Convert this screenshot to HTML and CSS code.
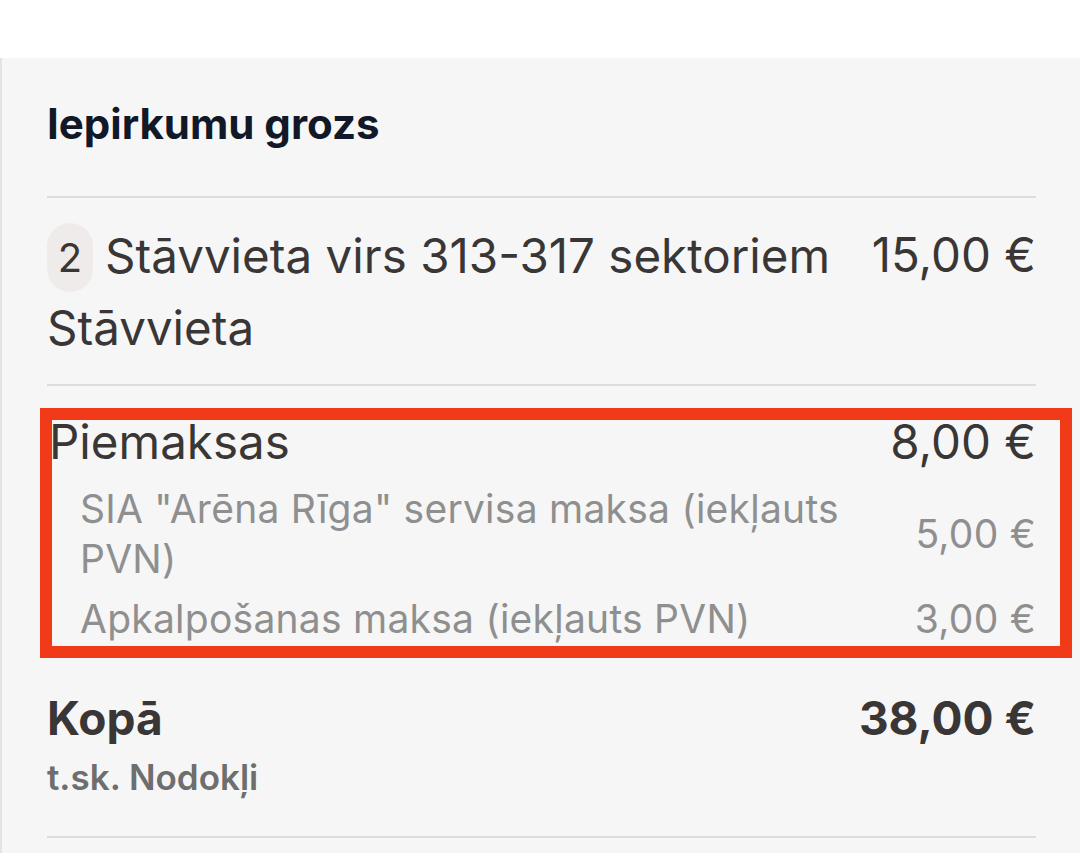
FILE: index.html
```html
<!DOCTYPE html>
<html lang="lv">
<head>
<meta charset="utf-8">
<title>Iepirkumu grozs</title>
<link rel="stylesheet" href="styles.css">
</head>
<body>
<div class="top-space"></div>
<main class="cart">
  <h2 class="cart-title">Iepirkumu grozs</h2>

  <section class="line-item">
    <div class="line-main">
      <div class="line-label">
        <span class="qty">2</span><span class="line-name">Stāvvieta virs 313-317 sektoriem</span>
      </div>
      <div class="price">15,00 €</div>
    </div>
    <div class="line-sub">Stāvvieta</div>
  </section>

  <section class="fees">
    <div class="fees-head">
      <div class="fees-name">Piemaksas</div>
      <div class="price">8,00 €</div>
    </div>
    <ul class="fee-list">
      <li class="fee">
        <span class="fee-name">SIA "Arēna Rīga" servisa maksa (iekļauts PVN)</span>
        <span class="fee-price">5,00 €</span>
      </li>
      <li class="fee">
        <span class="fee-name">Apkalpošanas maksa (iekļauts PVN)</span>
        <span class="fee-price">3,00 €</span>
      </li>
    </ul>
  </section>

  <section class="total">
    <div class="total-row">
      <div class="total-name">Kopā</div>
      <div class="total-price">38,00 €</div>
    </div>
    <div class="tax">t.sk. Nodokļi</div>
  </section>
</main>
</body>
</html>
```

FILE: styles.css
```css
html, body {
  margin: 0;
  padding: 0;
  background: #ffffff;
}

body {
  font-family: Inter, "Noto Sans", "Liberation Sans", sans-serif;
  color: #3a3636;
}

.top-space {
  height: 58px;
}

.cart {
  background: #f6f6f6;
  border-left: 2px solid #e4e4e4;
  padding: 33px 44px 0 45px;
  min-height: calc(100vh - 91px);
}

.cart-title {
  margin: 0;
  font-size: 42px;
  line-height: 66px;
  font-weight: 700;
  color: #111827;
  padding-bottom: 39px;
  border-bottom: 2px solid #dddddd;
}

.line-item {
  padding: 21px 0 20px;
  border-bottom: 2px solid #dddddd;
  font-size: 47.5px;
  line-height: 72px;
}

.line-main {
  display: flex;
  justify-content: space-between;
  align-items: flex-start;
  gap: 24px;
}

.line-label {
  display: flex;
  align-items: center;
}

.qty {
  display: inline-flex;
  align-items: center;
  justify-content: center;
  width: 46px;
  height: 69px;
  border-radius: 23px;
  background: #f0ebeb;
  font-size: 40px;
  margin-right: 12px;
  margin-top: 4px;
}

.price {
  white-space: nowrap;
}

.fees {
  position: relative;
  padding: 20px 0 20px;
  font-size: 47.5px;
  line-height: 72px;
}

.fees::before {
  content: "";
  position: absolute;
  left: -7px;
  right: -36px;
  top: 22px;
  height: 250px;
  box-sizing: border-box;
  border: 12px solid #f13a18;
  z-index: 0;
}

.fees-head,
.fee-list {
  position: relative;
  z-index: 1;
}

.fees-head {
  display: flex;
  justify-content: space-between;
}

.fees-name {
  margin-left: 2px;
}

.fee-list {
  list-style: none;
  margin: 6px 0 0;
  padding: 0 0 0 33px;
  display: flex;
  flex-direction: column;
  gap: 10px;
  font-size: 39px;
  letter-spacing: 0.25px;
  line-height: 50px;
  color: #8f8f8f;
}

.fee {
  display: flex;
  justify-content: space-between;
  align-items: center;
  gap: 24px;
}

.fee-name {
  flex: 1;
}

.fee-price {
  white-space: nowrap;
}

.total {
  padding: 21px 0 34px;
  border-bottom: 2px solid #dddddd;
}

.total-row {
  display: flex;
  justify-content: space-between;
  font-size: 46px;
  line-height: 67px;
  font-weight: 700;
}

.tax {
  font-size: 35px;
  line-height: 50px;
  font-weight: 600;
  color: #6e6e6e;
}
```
